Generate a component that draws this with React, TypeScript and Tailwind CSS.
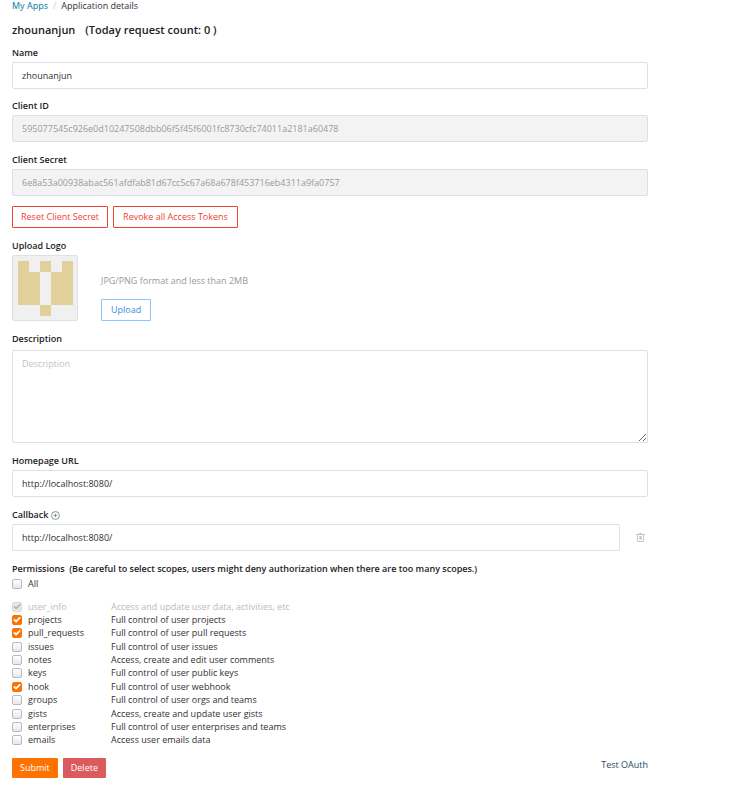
import React, { useState } from 'react';

const inputClass =
  'block h-[27px] w-full rounded-[2px] border border-[#dcdfe6] bg-white px-[9px] text-[9px] text-[#303133] outline-none disabled:bg-[#f3f3f3] disabled:text-[#9a9a9a]';
const labelClass = 'block h-[18px] text-[9px] leading-[18px] font-semibold text-[#222]';

type Scope = { name: string; text: string; checked?: boolean; disabled?: boolean };

const scopes: Scope[] = [
  { name: 'user_info', text: 'Access and update user data, activities, etc', checked: true, disabled: true },
  { name: 'projects', text: 'Full control of user projects', checked: true },
  { name: 'pull_requests', text: 'Full control of user pull requests', checked: true },
  { name: 'issues', text: 'Full control of user issues' },
  { name: 'notes', text: 'Access, create and edit user comments' },
  { name: 'keys', text: 'Full control of user public keys' },
  { name: 'hook', text: 'Full control of user webhook', checked: true },
  { name: 'groups', text: 'Full control of user orgs and teams' },
  { name: 'gists', text: 'Access, create and update user gists' },
  { name: 'enterprises', text: 'Full control of user enterprises and teams' },
  { name: 'emails', text: 'Access user emails data' },
];

function Check({ id, checked, disabled }: { id: string; checked?: boolean; disabled?: boolean }) {
  const [on, setOn] = useState(!!checked);
  return (
    <span className="relative block h-[10px] w-[10px] shrink-0">
      <input
        id={id}
        type="checkbox"
        checked={on}
        disabled={disabled}
        onChange={() => setOn(!on)}
        className="block h-[10px] w-[10px] appearance-none rounded-[2px] border border-[#b9b9c0] bg-linear-to-b from-white to-[#e6e7ee] enabled:checked:border-[#fe7300] enabled:checked:bg-[#fe7300] enabled:checked:bg-none disabled:border-[#d8d8d8] disabled:bg-[#e8e8e8] disabled:bg-none"
      />
      {on && (
        <svg
          viewBox="0 0 10 10"
          className={`pointer-events-none absolute inset-0 h-[10px] w-[10px] ${disabled ? 'text-[#b8b8b8]' : 'text-white'}`}
          fill="none"
          stroke="currentColor"
          strokeWidth="1.8"
        >
          <path d="M1.9 4.4 4.1 6.4 8.2 2.4" />
        </svg>
      )}
    </span>
  );
}

function Field({ id, label, value, disabled }: { id: string; label: string; value: string; disabled?: boolean }) {
  return (
    <div>
      <label htmlFor={id} className={labelClass}>
        {label}
      </label>
      <input id={id} defaultValue={value} disabled={disabled} className={inputClass} />
    </div>
  );
}

export default function App() {
  return (
    <main className="bg-white pr-[92px] pl-3 font-['Open_Sans','Noto_Sans',sans-serif] text-[9px] text-[#303133]">
      <nav className="flex h-3 gap-[5px] leading-3">
        <a href="#apps" className="text-[#00799a]">
          My Apps
        </a>
        <span className="text-[#ccc]">/</span>
        <span>Application details</span>
      </nav>
      <h1 className="mt-[9px] flex h-[18px] gap-[10px] text-[11px] leading-[18px] font-semibold text-[#222]">
        <span>zhounanjun</span>
        <span>(Today request count: 0 )</span>
      </h1>

      <form className="mt-[5px]" onSubmit={(e) => e.preventDefault()}>
        <Field id="name" label="Name" value="zhounanjun" />
        <div className="mt-2 flex flex-col gap-[9px]">
          <Field
            id="client-id"
            label="Client ID"
            value="595077545c926e0d10247508dbb06f5f45f6001fc8730cfc74011a2181a60478"
            disabled
          />
          <Field
            id="client-secret"
            label="Client Secret"
            value="6e8a53a00938abac561afdfab81d67cc5c67a68a678f453716eb4311a9fa0757"
            disabled
          />
        </div>
        <div className="mt-[10px] flex gap-[5px]">
          <button type="button" className="h-[22px] rounded-[1px] border border-[#f04134] px-2 text-[#f04134]">
            Reset Client Secret
          </button>
          <button type="button" className="h-[22px] rounded-[1px] border border-[#f04134] px-[9px] text-[#f04134]">
            Revoke all Access Tokens
          </button>
        </div>

        <div className="mt-[9px]">
          <div className={labelClass}>Upload Logo</div>
          <div className="flex gap-[23px]">
            <div className="h-[66px] w-[66px] rounded-[2px] border border-[#dce1e7] bg-[#f0f0f0]">
              <svg viewBox="0 0 64 64" className="h-full w-full" fill="#e2d09a" aria-label="Application logo">
                <path d="M5 5H16V16H27V49H5ZM27 5H38V16H27ZM49 5H60V49H38V16H49ZM27 49H38V60H27Z" />
              </svg>
            </div>
            <div className="flex flex-col items-start justify-end">
              <p className="mb-3 leading-3 text-[#999]">JPG/PNG format and less than 2MB</p>
              <button type="button" className="h-[22px] rounded-[1px] border border-[#8cc5ff] px-[9px] text-[#3d8be0]">
                Upload
              </button>
            </div>
          </div>
        </div>

        <div className="mt-[9px]">
          <label htmlFor="description" className={labelClass}>
            Description
          </label>
          <textarea
            id="description"
            placeholder="Description"
            className="mt-[2px] block h-[93px] w-full resize rounded-[2px] border border-[#dcdfe6] px-[9px] py-[7px] leading-3 outline-none placeholder:text-[#bfbfbf]"
          />
        </div>

        <div className="mt-[9px] flex flex-col gap-[9px]">
          <Field id="homepage" label="Homepage URL" value="http://localhost:8080/" />
          <div>
            <div className="flex items-center gap-[3px]">
              <label htmlFor="callback" className={labelClass}>
                Callback
              </label>
              <button type="button" aria-label="Add callback">
                <svg viewBox="0 0 10 10" className="block h-[9px] w-[9px]" fill="none" stroke="#6f7f7c" strokeWidth="0.9">
                  <circle cx="5" cy="5" r="4.4" />
                  <path d="M5 3V7M3 5H7" />
                </svg>
              </button>
            </div>
            <div className="flex items-center">
              <input id="callback" defaultValue="http://localhost:8080/" className={inputClass} />
              <button type="button" aria-label="Remove callback" className="ml-4 shrink-0 pr-[3px]">
                <svg viewBox="0 0 9 9" className="block h-[9px] w-[9px]" fill="none" stroke="#c4c8cc">
                  <path d="M0 1.5H9M1.5 1.5V8.5H7.5V1.5M3 0.5H6M4.5 3V6.5" />
                  <path d="M3.5 3V6.5H5.5V3" stroke="#d5dade" />
                </svg>
              </button>
            </div>
          </div>
        </div>

        <fieldset className="mt-[9px]">
          <legend className={labelClass}>
            Permissions&nbsp; (Be careful to select scopes, users might deny authorization when there are too many scopes.)
          </legend>
          <div className="flex h-3 items-center gap-[6px]">
            <Check id="scope-all" />
            <label htmlFor="scope-all" className="leading-3">
              All
            </label>
          </div>
          <ul className="mt-[10px] grid h-[147px] grid-rows-11">
            {scopes.map((s) => (
              <li key={s.name} className={`flex items-center ${s.disabled ? 'text-[#bbb]' : ''}`}>
                <Check id={s.name} checked={s.checked} disabled={s.disabled} />
                <label htmlFor={s.name} className="flex pl-[6px] leading-3">
                  <span className="w-[83px]">{s.name}</span>
                  <span>{s.text}</span>
                </label>
              </li>
            ))}
          </ul>
        </fieldset>

        <div className="mt-[11px] flex items-start justify-between">
          <div className="flex gap-[5px]">
            <button type="submit" className="h-5 rounded-[1px] bg-[#fe7300] px-2 text-white">
              Submit
            </button>
            <button type="button" className="h-5 rounded-[1px] bg-[#db5a5b] px-2 text-white">
              Delete
            </button>
          </div>
          <a href="#test" className="leading-[14px] text-[#1c4a6b]">
            Test OAuth
          </a>
        </div>
      </form>
    </main>
  );
}
